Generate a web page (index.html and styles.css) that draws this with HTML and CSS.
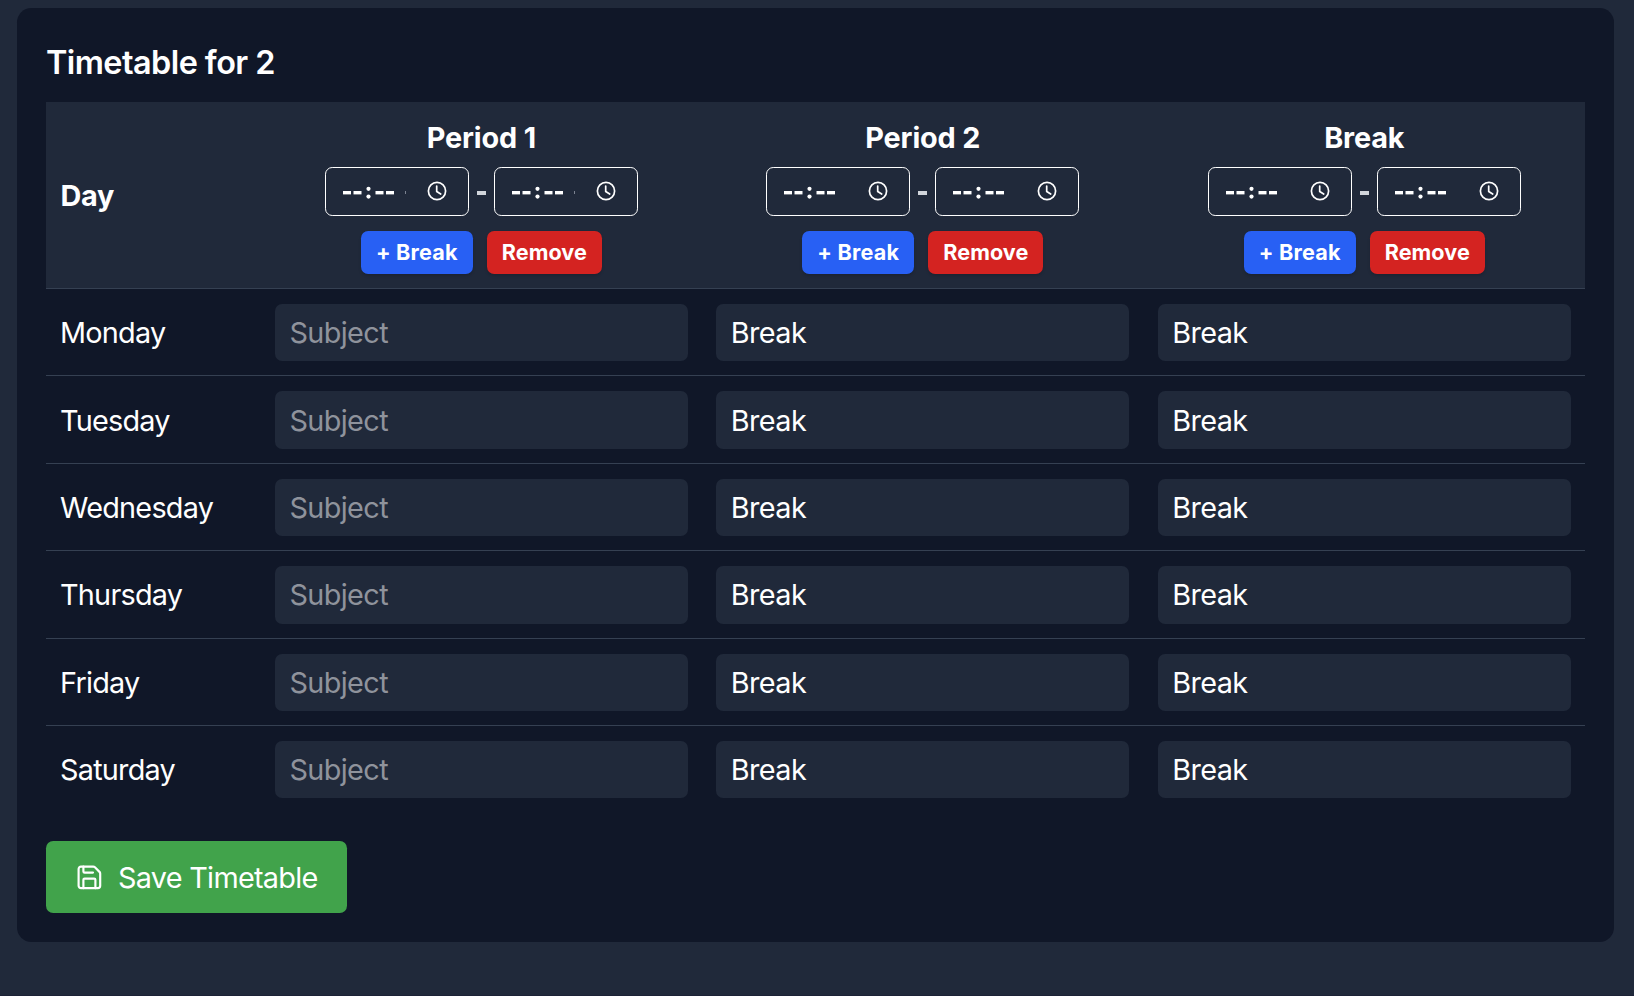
FILE: index.html
```html
<!DOCTYPE html>
<html lang="en">
<head>
<meta charset="utf-8">
<title>Timetable</title>
<link rel="stylesheet" href="styles.css">
</head>
<body>
<main class="card">
<h2 class="title">Timetable for 2</h2>
<table class="timetable">
<thead><tr id="head"><th class="day-head"><span class="day-label">Day</span></th></tr></thead>
<tbody id="rows"></tbody>
</table>
<button class="save"><svg class="save-icon" viewBox="0 0 24 24"><path d="M15.2 3a2 2 0 0 1 1.4.6l3.8 3.8a2 2 0 0 1 .6 1.4V19a2 2 0 0 1-2 2H5a2 2 0 0 1-2-2V5a2 2 0 0 1 2-2z"/><path d="M17 21v-7a1 1 0 0 0-1-1H8a1 1 0 0 0-1 1v7"/><path d="M7 3v4a1 1 0 0 0 1 1h7"/></svg><span class="save-text">Save Timetable</span></button>
</main>
<script src="app.js"></script>
</body>
</html>
```
FILE: styles.css
```css
* { box-sizing: border-box; }
body { margin: 0; height: 996px; padding: 8px 20px 0 17px; background: #20293a; border-bottom: 1px solid #1c2236; color: #fff; font-family: Inter, "Liberation Sans", sans-serif; font-size: 28.8px; }
.card { height: 934px; padding: 29px; background: #101728; border-radius: 14.4px; }
.title { margin: 0 0 14px; height: 51px; line-height: 52px; font-size: 32.4px; font-weight: 600; letter-spacing: -.55px; white-space: nowrap; }
.timetable { width: 1539px; table-layout: fixed; border-collapse: separate; border-spacing: 0; }
.day-head { width: 214.6px; text-align: left; }
th { height: 187px; padding: 14.4px; background: #20293a; border-bottom: 1px solid #354052; vertical-align: middle; font-weight: 700; }
td { height: 87.4px; padding: 15px 14.4px 14px; border-bottom: 1px solid #354052; vertical-align: middle; }
tr:last-child td { border-bottom-color: transparent; }
.day-label { letter-spacing: -.2px; }
.period { display: flex; flex-direction: column; align-items: center; }
.period-name { height: 43px; line-height: 41px; letter-spacing: -.15px; }
.times { display: flex; align-items: center; gap: 8px; margin-top: 7px; }
.dash { width: 9px; height: 4px; margin-top: 4px; background: #d1d5db; }
.time { display: flex; align-items: center; width: 144px; height: 49px; padding: 0 21px 0 16px; border: 1px solid #fff; border-radius: 7.2px; justify-content: space-between; }
.clock { width: 20px; height: 20px; fill: none; stroke: #fff; stroke-width: 1.7; stroke-linecap: round; stroke-linejoin: round; }
.marks { width: 66px; height: 16px; margin-top: 1px; fill: #fff; }
.tick { fill: #7b8290; }
.actions { display: flex; gap: 14px; margin-top: 15px; }
.btn { height: 43px; padding: 0; border: 0; border-radius: 7.2px; color: #fff; font: 700 21.6px/43px Inter, sans-serif; letter-spacing: .2px; box-shadow: 0 2px 3px rgba(0,0,0,.15); }
.btn-break { width: 112px; background: #2860f4; }
.btn-remove { width: 115px; background: #d42321; letter-spacing: .05px; }
.day { padding-left: 14px; letter-spacing: -.75px; }
.subject { display: block; width: 100%; height: 57.4px; padding: 0 14.4px; border: 0; border-radius: 7.2px; background: #20293a; color: #fff; font: 28.8px Inter, sans-serif; letter-spacing: -.6px; outline: 0; }
.subject::placeholder { color: #8f939c; opacity: 1; }
.save { display: flex; align-items: center; gap: 14.4px; width: 301px; height: 72px; margin-top: 28px; padding: 0 28.8px; border: 0; border-radius: 7.2px; background: #41a34b; color: #fff; font: 28.8px Inter, sans-serif; white-space: nowrap; }
.save-icon { flex: none; width: 28.8px; height: 28.8px; fill: none; stroke: #fff; stroke-width: 1.8; stroke-linecap: round; stroke-linejoin: round; }
.save-text { letter-spacing: -.7px; }
```
FILE: app.js
```js
const periods = ["Period 1", "Period 2", "Break"];
const days = ["Monday", "Tuesday", "Wednesday", "Thursday", "Friday", "Saturday"];

const time = index => `<div class="time"><svg class="marks" viewBox="0 0 66 16"><rect x="1" y="7" width="8" height="3.4"/><rect x="11.5" y="7" width="8" height="3.4"/><circle cx="26.5" cy="4.8" r="2.1"/><circle cx="26.5" cy="12.6" r="2.1"/><rect x="33.5" y="7" width="8" height="3.4"/><rect x="44" y="7" width="8" height="3.4"/>${index === 0 ? '<rect class="tick" x="63" y="7" width="1" height="3"/>' : ""}</svg><svg class="clock" viewBox="0 0 20 20"><circle cx="10" cy="10" r="8.6"/><path d="M9.7 5v5.5l4 2.5"/></svg></div>`;

document.getElementById("head").insertAdjacentHTML("beforeend", periods.map((name, i) =>
  `<th><div class="period"><span class="period-name">${name}</span><div class="times">${time(i)}<span class="dash"></span>${time(i)}</div><div class="actions"><button class="btn btn-break">+ Break</button><button class="btn btn-remove">Remove</button></div></div></th>`).join(""));

document.getElementById("rows").innerHTML = days.map(day =>
  `<tr><td class="day">${day}</td>${periods.map((_, i) => `<td><input class="subject" placeholder="Subject" value="${i ? "Break" : ""}"></td>`).join("")}</tr>`).join("");
```
